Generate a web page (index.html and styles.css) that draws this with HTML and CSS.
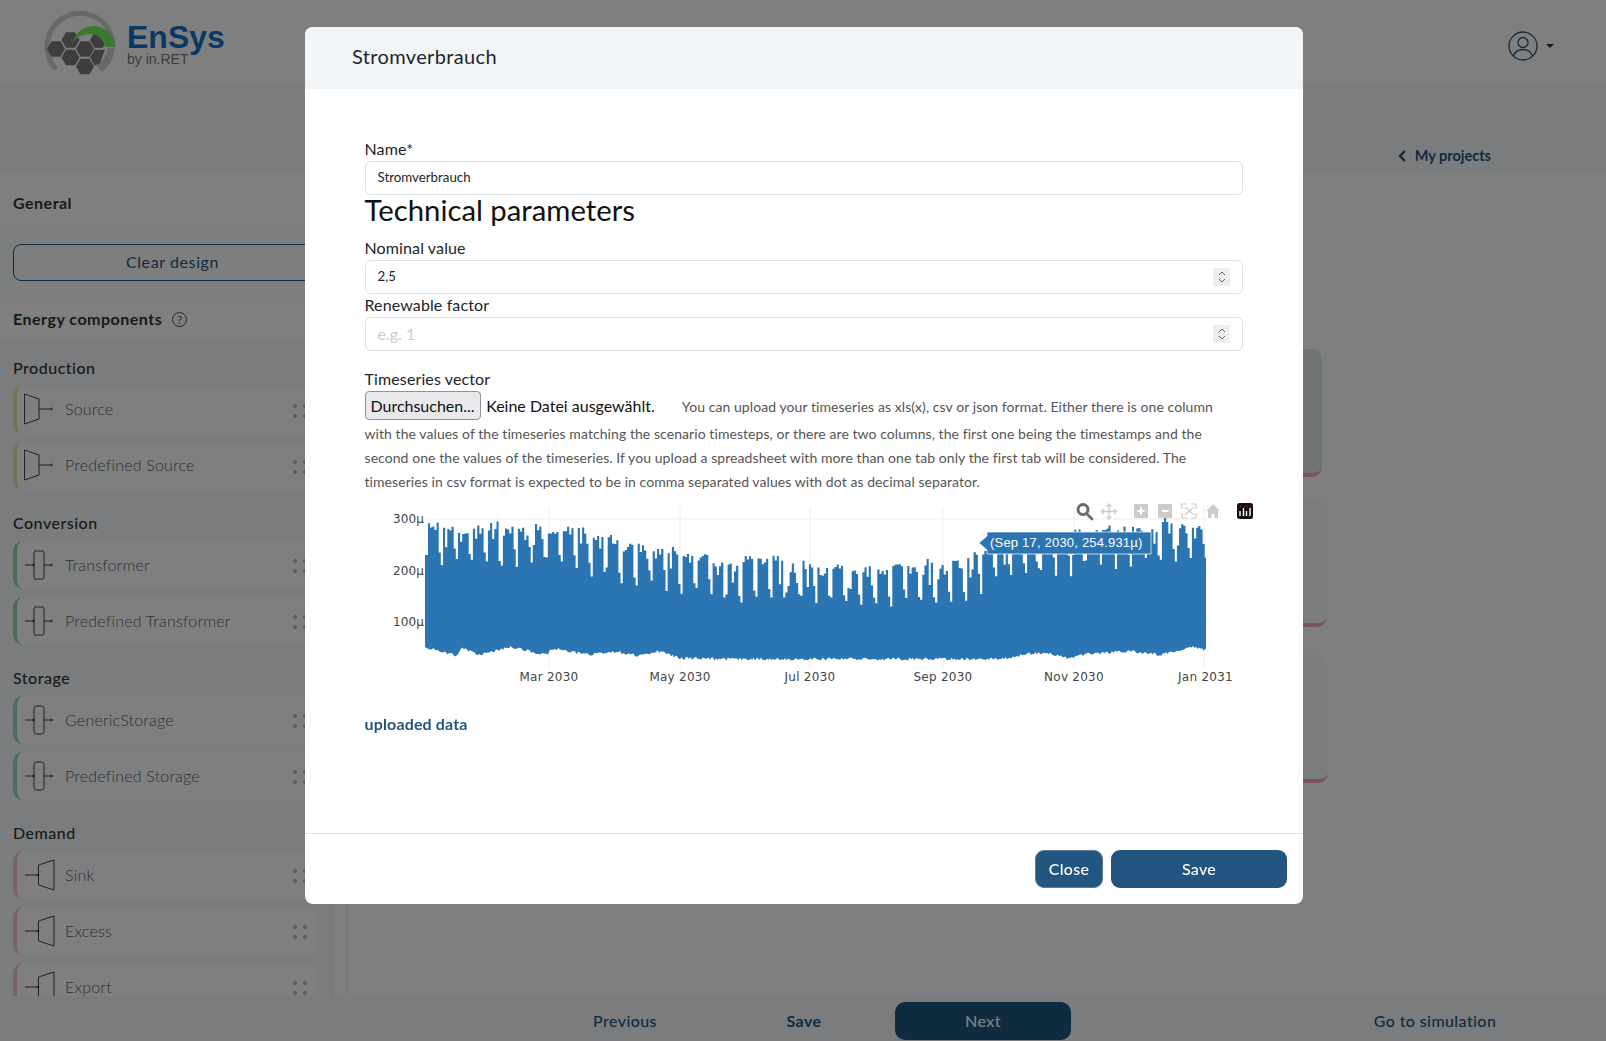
FILE: index.html
```html
<!DOCTYPE html>
<html lang="en">
<head>
  <meta charset="UTF-8" />
  <title>EnSys - Energy system design</title>
  <link rel="stylesheet" href="styles.css">
</head>
<body>

  <svg class="icon-defs" width="0" height="0">
    <defs>
      <g id="ic-source"><path d="M1.5 2 16 7V27L1.5 32Z"/><path d="M16 17H28"/><circle cx="28.5" cy="17" r=".9"/></g>
      <g id="ic-transformer"><rect x="11" y="3" width="10" height="28" rx="1"/><path d="M2 17H11M21 17H28"/><circle cx="28.5" cy="17" r=".9"/><circle cx="10.5" cy="17" r=".9"/></g>
      <g id="ic-storage"><rect x="11" y="3" width="10" height="28" rx="2.5"/><path d="M2 17H11M21 17H28"/><circle cx="28.5" cy="17" r=".9"/><circle cx="10.5" cy="17" r=".9"/></g>
      <g id="ic-sink"><path d="M15.5 7 31 2V32L15.5 27Z"/><path d="M2 17H15"/><circle cx="15" cy="17" r=".9"/></g>
    </defs>
  </svg>

  <header class="topbar">
    <svg class="logo" width="200" height="76" viewBox="38 5 200 76">
      <path d="M56 68A33 33 0 1 1 113 46" fill="none" stroke="#d0d0d0" stroke-width="5"/>
      <path d="M115 47A35 35 0 0 1 102 71L96 64A25 25 0 0 0 108 47Z" fill="#d0d0d0"/>
      <g fill="#7a7a7a">
        <polygon points="47,48 51.5,40.2 60.5,40.2 65,48 60.5,55.8 51.5,55.8"/>
        <polygon points="61.5,39 66,31.2 75,31.2 79.5,39 75,46.8 66,46.8"/>
        <polygon points="61.5,56.5 66,48.7 75,48.7 79.5,56.5 75,64.3 66,64.3"/>
        <polygon points="76,48 80.5,40.2 89.5,40.2 94,48 89.5,55.8 80.5,55.8"/>
        <polygon points="76,65.5 80.5,57.7 89.5,57.7 94,65.5 89.5,73.3 80.5,73.3"/>
        <polygon points="90,39 94.5,31.2 103,31.2 106,39 103,46.8 94.5,46.8"/>
        <polygon points="90,56.5 94.5,48.7 105,48.7 100,62 95,64.3 94.5,64.3"/>
      </g>
      <path d="M72 42C76 30 86 25 94 25C105 25 114 34 115 46L105 46C103 38 98 33 90 33C83 33 77 36 72 42Z" fill="#74f060"/>
      <text class="logo-name" x="127" y="47">EnSys</text>
      <text class="logo-sub" x="127" y="63">by in.RET</text>
    </svg>
    <div class="user">
      <svg width="30" height="30" viewBox="0 0 30 30" fill="none" stroke="#1f5680" stroke-width="1.3">
        <circle cx="15" cy="15" r="14"/>
        <circle cx="15" cy="11.5" r="5"/>
        <path d="M5.5 25C7 20 11 18.5 15 18.5S23 20 24.5 25"/>
      </svg>
      <span class="caret"></span>
    </div>
  </header>

  <div class="band">
    <a class="back-link">
      <svg width="9" height="12" viewBox="0 0 9 12" fill="none" stroke="#1f5680" stroke-width="2.4"><path d="M7 1 2 6l5 5"/></svg>
      My projects
    </a>
  </div>

  <div class="workspace">
    <aside class="sidebar">
      <div class="side-title">General</div>
      <div class="side-action"><button class="clear-btn">Clear design</button></div>
      <div class="side-title side-title-sm">
        Energy components
        <span class="help">?</span>
      </div>
      <div class="side-list">
        <h4>Production</h4>
        <div class="comp comp-prod"><svg class="comp-icon"><use href="#ic-source"/></svg><span>Source</span><i class="dots"></i></div>
        <div class="comp comp-prod"><svg class="comp-icon"><use href="#ic-source"/></svg><span>Predefined Source</span><i class="dots"></i></div>
        <h4>Conversion</h4>
        <div class="comp comp-conv"><svg class="comp-icon"><use href="#ic-transformer"/></svg><span>Transformer</span><i class="dots"></i></div>
        <div class="comp comp-conv"><svg class="comp-icon"><use href="#ic-transformer"/></svg><span>Predefined Transformer</span><i class="dots"></i></div>
        <h4>Storage</h4>
        <div class="comp comp-stor"><svg class="comp-icon"><use href="#ic-storage"/></svg><span>GenericStorage</span><i class="dots"></i></div>
        <div class="comp comp-stor"><svg class="comp-icon"><use href="#ic-storage"/></svg><span>Predefined Storage</span><i class="dots"></i></div>
        <h4>Demand</h4>
        <div class="comp comp-dem"><svg class="comp-icon"><use href="#ic-sink"/></svg><span>Sink</span><i class="dots"></i></div>
        <div class="comp comp-dem"><svg class="comp-icon"><use href="#ic-sink"/></svg><span>Excess</span><i class="dots"></i></div>
        <div class="comp comp-dem"><svg class="comp-icon"><use href="#ic-sink"/></svg><span>Export</span><i class="dots"></i></div>
      </div>
    </aside>
    <div class="track"></div>
    <main class="canvas">
      <div class="panel panel-a"></div>
      <div class="panel panel-b"></div>
      <div class="panel panel-c"></div>
    </main>
  </div>

  <footer class="bottombar">
    <a class="step">Previous</a>
    <a class="step step-bold">Save</a>
    <a class="step step-next">Next</a>
    <a class="step step-sim">Go to simulation</a>
  </footer>

  <div class="backdrop"></div>

  <div class="modal-wrap">
    <div class="modal">
      <div class="modal-head">Stromverbrauch</div>
      <div class="modal-body">
        <label class="lbl">Name*</label>
        <div class="field"><input value="Stromverbrauch"></div>
        <h2 class="section">Technical parameters</h2>
        <label class="lbl">Nominal value</label>
        <div class="field">
          <input value="2,5">
          <span class="spin"><svg width="8" height="14" viewBox="0 0 8 14" fill="none" stroke="#666"><path d="M1 5l3-3 3 3M1 9l3 3 3-3"/></svg></span>
        </div>
        <label class="lbl lbl-tight">Renewable factor</label>
        <div class="field">
          <input class="big" placeholder="e.g. 1">
          <span class="spin"><svg width="8" height="14" viewBox="0 0 8 14" fill="none" stroke="#666"><path d="M1 5l3-3 3 3M1 9l3 3 3-3"/></svg></span>
        </div>
        <label class="lbl lbl-gap">Timeseries vector</label>
        <div class="upload">
          <button class="file-btn">Durchsuchen...</button>
          <span class="file-name">Keine Datei ausgewählt.</span>
          <span class="hint">You can upload your timeseries as xls(x), csv or json format. Either there is one column with the values of the timeseries matching the scenario timesteps, or there are two columns, the first one being the timestamps and the second one the values of the timeseries. If you upload a spreadsheet with more than one tab only the first tab will be considered. The timeseries in csv format is expected to be in comma separated values with dot as decimal separator.</span>
        </div>

        <svg class="plot" id="plot" width="900" height="205" viewBox="365 495 900 205">
          <g class="grid">
            <path d="M425 519H1207M425 571H1207M425 622H1207"/>
            <path d="M549 507V668M680 507V668M810 507V668M943 507V668M1074 507V668M1204 507V668"/>
          </g>
          <path id="series" fill="#2a75b2"/>
          <g class="ytick">
            <text x="424" y="523">300µ</text>
            <text x="424" y="575">200µ</text>
            <text x="424" y="626">100µ</text>
          </g>
          <g class="xtick">
            <text x="549" y="681">Mar 2030</text>
            <text x="680" y="681">May 2030</text>
            <text x="810" y="681">Jul 2030</text>
            <text x="943" y="681">Sep 2030</text>
            <text x="1074" y="681">Nov 2030</text>
            <text x="1205.5" y="681">Jan 2031</text>
          </g>
          <path class="hover-box" d="M979 543 987 536V532H1151V554H987V550Z"/>
          <text class="hover-text" x="990" y="547">(Sep 17, 2030, 254.931µ)</text>
          <g class="bar-icons">
            <g fill="none" stroke="#6a6a6a">
              <circle cx="1083" cy="509.5" r="5" stroke-width="3"/>
              <path d="M1087 514l5 5" stroke-width="2.6" stroke-linecap="round"/>
            </g>
            <path d="M1109 504v15M1101.5 511.5h15M1106.5 506.5l2.500-2.500 2.500 2.500M1106.5 516.5l2.500 2.500 2.500-2.500M1104 509l-2.500 2.500 2.500 2.500M1114 509l2.500 2.500-2.500 2.500" fill="none" stroke="#ccc" stroke-width="1.3"/>
            <rect x="1134" y="504" width="14" height="14" fill="#ccc"/>
            <path d="M1141 507.5v7M1137.5 511h7" stroke="#fff" stroke-width="2"/>
            <rect x="1158" y="504" width="14" height="14" fill="#ccc"/>
            <path d="M1161.5 511h7" stroke="#fff" stroke-width="2"/>
            <path d="M1182 509v-5h5M1191 504h5v5M1196 513v5h-5M1187 518h-5v-5M1185 507l9 8M1194 507l-9 8" fill="none" stroke="#ccc" stroke-width="1.2"/>
            <path d="M1213 504 1206 511h2v7h3.500v-4h3v4h3.500v-7h2Z" fill="#ccc"/>
            <rect x="1237" y="503" width="16" height="16" rx="2.5" fill="#111"/>
            <path d="M1240 511v5M1243.5 508v8M1246.5 511v5M1250 508v8" stroke="#fff" stroke-width="1.4"/>
            <path d="M1240 506.5h.8M1243.5 506.5h.8M1246.5 506.5h.8M1250 506.5h.8" stroke="#e0304f" stroke-width="1.4"/>
          </g>
        </svg>

        <a class="uploaded">uploaded data</a>
      </div>
      <div class="modal-foot">
        <button class="btn btn-close">Close</button>
        <button class="btn btn-save">Save</button>
      </div>
    </div>
  </div>

  <script src="chart.js"></script>
</body>
</html>
```

FILE: styles.css
```css
* { box-sizing: border-box; }
body {
  margin: 0;
  height: 100vh;
  overflow: hidden;
  display: flex;
  flex-direction: column;
  font-family: 'Lato', sans-serif;
  font-size: 16px;
  color: #212529;
  background: #fff;
}
.icon-defs { position: absolute; }
a { cursor: pointer; }

/* page behind the dialog */
.topbar {
  height: 86px;
  flex: none;
  display: flex;
  justify-content: space-between;
  padding: 6px 52px 0 38px;
  background: #fff;
}
.logo-name { font: bold 32px 'Liberation Sans', sans-serif; fill: #1470c8; }
.logo-sub { font: 14px 'Liberation Sans', sans-serif; fill: #7a7a7a; }
.user {
  display: flex;
  align-items: center;
  gap: 8px;
  height: 79px;
}
.caret {
  width: 0;
  height: 0;
  border: 4px solid transparent;
  border-top-color: #333;
  border-bottom: 0;
}
.band {
  height: 87px;
  flex: none;
  background: #f6f8fa;
  display: flex;
  justify-content: flex-end;
  align-items: flex-end;
  padding: 0 115px 5px 0;
}
.back-link {
  display: flex;
  align-items: center;
  gap: 8px;
  color: #1f5680;
  font-size: 14.5px;
  font-weight: 700;
  line-height: 24px;
}
.workspace { flex: 1; display: flex; min-height: 0; overflow: hidden; }
.sidebar { width: 332px; flex: none; overflow: hidden; background: #f6f9fb; }
.side-title {
  height: 55px;
  padding: 4px 0 0 13px;
  display: flex;
  align-items: center;
  gap: 10px;
  background: #fff;
  font-weight: 700;
  letter-spacing: .5px;
  color: #333;
}
.side-title-sm { height: 45px; padding: 0 0 3px 13px; }
.side-action { height: 69px; padding: 16px 0 0 13px; background: #fbfcfd; }
.clear-btn {
  width: 319px;
  height: 37px;
  padding: 0 0 2px;
  border: 1px solid #1f5680;
  border-radius: 8px;
  background: transparent;
  color: #1f5680;
  font: 16px 'Lato', sans-serif;
  letter-spacing: .6px;
}
.help {
  width: 15px;
  height: 15px;
  margin-top: 3px;
  border: 1px solid #1f5680;
  border-radius: 50%;
  color: #1f5680;
  font-size: 11px;
  font-weight: 400;
  letter-spacing: 0;
  line-height: 13px;
  text-align: center;
}
.side-list { padding: 14px 16px 0 13px; }
.side-list h4 {
  margin: 0;
  height: 30px;
  font-size: 16px;
  font-weight: 500;
  letter-spacing: .5px;
  line-height: 24px;
  color: #333;
}
.comp {
  height: 48px;
  margin-bottom: 8px;
  display: flex;
  align-items: center;
  background: #fff;
  border-left: 4px solid #ccc;
  border-radius: 10px;
  color: #5a6066;
  font-weight: 300;
  letter-spacing: .2px;
  position: relative;
}
.comp span { margin: -2px 0 0 -2px; }
.comp-prod span { margin-top: -4px; }
.comp + h4 { margin-top: 21px; }
.comp-prod { border-left-color: #f0e2a0; }
.comp-conv { border-left-color: #8fdfa6; }
.comp-stor { border-left-color: #8cdcd0; }
.comp-dem { border-left-color: #f5c6d0; }
.comp-icon {
  width: 34px;
  height: 34px;
  flex: none;
  margin: 0 10px 0 6px;
  fill: none;
  stroke: #444;
  stroke-width: 1;
  overflow: visible;
}
.comp-prod .comp-icon { margin-top: -2px; }
.dots {
  position: absolute;
  right: 9px;
  top: 18px;
  width: 14px;
  height: 14px;
  background: radial-gradient(circle at 2px 2px, #b4bcc4 1.8px, transparent 2.2px) 0 0 / 10px 10px;
}
.track {
  width: 15px;
  flex: none;
  background: #fefefe;
  border-left: 1px solid #e6e6e6;
  border-right: 1px solid #e6e6e6;
}
.canvas { flex: 1; padding: 176px 0 0 53px; background: #fff; }
.panel {
  height: 128px;
  background: #f6f8fa;
  border-radius: 10px;
  border-bottom: 4px solid #f5a9b8;
}
.panel-a { width: 922px; margin-bottom: 22px; background: #e2e8ea; }
.panel-b { width: 927px; margin-bottom: 28px; }
.panel-c { width: 928px; }
.bottombar {
  height: 45px;
  flex: none;
  display: flex;
  padding-left: 537px;
  background: #f6f8fa;
}
.step {
  width: 176px;
  height: 38px;
  margin: 6px 3px 0 0;
  color: #1f5680;
  font-weight: 500;
  letter-spacing: .4px;
  line-height: 38px;
  text-align: center;
}
.step-bold { font-weight: 700; color: #1f5680; }
.step-next { background: #1f5680; color: #fff; border-radius: 10px; }
.step-sim { margin-left: auto; margin-right: 83px; }

/* dialog */
.backdrop {
  position: fixed;
  inset: 0;
  background: rgba(0,0,0,0.5);
}
.modal-wrap {
  position: fixed;
  inset: 0;
  display: flex;
  justify-content: center;
  padding: 27px 0 0 2px;
}
.modal {
  width: 998px;
  height: 877px;
  display: flex;
  flex-direction: column;
  background: #fff;
  border-radius: 8px;
  overflow: hidden;
}
.modal-head {
  height: 62px;
  flex: none;
  padding: 0 0 2px 47px;
  background: #f3f6f9;
  font-size: 20px;
  letter-spacing: .35px;
  line-height: 59px;
  color: #212529;
}
.modal-body { flex: 1; padding: 48px 60px 0 59.5px; }
.lbl { display: block; height: 24px; line-height: 24px; letter-spacing: .12px; color: #212529; }
.lbl-tight { margin-top: -1px; }
.lbl-gap { margin-top: 16px; }
.section {
  margin: 0 0 7px;
  height: 34px;
  font-size: 29.3px;
  font-weight: 400;
  line-height: 30px;
  color: #111;
}
.field {
  height: 34px;
  display: flex;
  align-items: center;
  padding: 0 12px;
  border: 1px solid #dee2e6;
  border-radius: 6px;
}
.field input {
  flex: 1;
  min-width: 0;
  height: 100%;
  border: 0;
  outline: 0;
  padding: 0 0 2px;
  font: 13.3px 'Lato', sans-serif;
  color: #212529;
}
.field input.big { font-size: 16px; }
.field input::placeholder { color: #ccc; }
.spin {
  width: 17px;
  height: 18px;
  display: flex;
  align-items: center;
  justify-content: center;
  background: #eee;
}
.upload { height: 104px; font-size: 14px; letter-spacing: .07px; line-height: 24px; color: #555; }
.file-btn {
  width: 116px;
  height: 29px;
  margin-bottom: 2px;
  padding: 0 0 1px;
  background: #e9e9ed;
  border: 1px solid #8f8f9d;
  border-radius: 4px;
  font: 16px 'Lato', sans-serif;
  color: #111;
}
.file-name { margin: 0 24px 0 2px; font-size: 16px; letter-spacing: 0; color: #111; }
.plot { display: block; overflow: visible; }
.grid path { fill: none; stroke: #eee; stroke-width: 1; }
.ytick text { font: 12px 'DejaVu Sans', sans-serif; fill: #444; text-anchor: end; letter-spacing: .1px; }
.xtick text { font: 12px 'DejaVu Sans', sans-serif; fill: #444; text-anchor: middle; letter-spacing: .25px; }
.hover-box { fill: #2a75b2; stroke: #fff; stroke-opacity: .7; stroke-width: 1; }
.hover-text { font: 13px 'Liberation Sans', sans-serif; fill: #fff; letter-spacing: .2px; }
.uploaded {
  display: block;
  margin-top: 12px;
  line-height: 24px;
  font-weight: 700;
  letter-spacing: .15px;
  color: #1f5680;
}
.modal-foot {
  height: 71px;
  flex: none;
  display: flex;
  justify-content: flex-end;
  gap: 8px;
  padding: 16px 16px 0 0;
  border-top: 1px solid #dee2e6;
}
.btn {
  height: 38px;
  padding: 0 0 2px;
  background: #22557f;
  border: 0;
  border-radius: 9px;
  color: #fff;
  font: 500 16px 'Lato', sans-serif;
  letter-spacing: .3px;
}
.btn-close { width: 68px; border: 1px solid #5c7c99; }
.btn-save { width: 176px; }
```

FILE: chart.js
```js
var topKeys = [[428,520],[470,522],[510,519],[550,517],[583,522],[590,527],[617,534],[650,540],[683,545],[710,545],[723,557],[760,553],[800,558],[850,560],[900,557],[965,557],[985,540],[1040,532],[1080,525],[1120,519],[1206,514]];
var lowKeys = [[425,647],[440,651],[457,656],[462,648],[480,655],[510,647],[547,655],[553,648],[590,655],[613,651],[640,656],[657,651],[680,658],[713,659],[1000,659],[1033,653],[1047,653],[1067,658],[1087,654],[1130,651],[1160,655],[1193,647],[1206,650]];

var seed = 97;
function rnd() {
  seed = (seed * 16807) % 2147483647;
  return seed / 2147483647;
}
function interp(keys, x) {
  for (var i = 1; i < keys.length; i++) {
    if (x <= keys[i][0]) {
      var a = keys[i-1], b = keys[i];
      return a[1] + (b[1] - a[1]) * (x - a[0]) / (b[0] - a[0]);
    }
  }
  return keys[keys.length-1][1];
}

var dayW = 781 / 365, x = 428, day = 0, weekOff = 0;
var d = 'M425 ' + interp(lowKeys, 425).toFixed(1) + 'V555H428';
while (x < 1206) {
  var wd = day % 7, y = interp(topKeys, x);
  if (wd == 0) weekOff = rnd() * 8;
  if (wd == 5) y += 26 + rnd() * 16;
  else if (wd == 6) y += 36 + rnd() * 14;
  else if (rnd() < .12) y += 16 + rnd() * 14;
  else y += weekOff + rnd() * 11;
  x = Math.min(x + dayW, 1206);
  d += 'V' + y.toFixed(1) + 'H' + x.toFixed(1);
  day++;
}
d += 'V' + interp(lowKeys, 1206).toFixed(1);
for (var lx = 1205; lx > 425; lx -= 1.5) {
  d += 'L' + lx + ' ' + (interp(lowKeys, lx) + rnd() * 3 - 1.5).toFixed(1);
}
document.getElementById('series').setAttribute('d', d + 'Z');
```
